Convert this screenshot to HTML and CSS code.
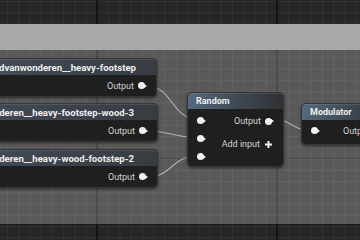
FILE: index.html
```html
<!DOCTYPE html>
<html lang="en">
<head>
    <meta charset="UTF-8">
    <meta name="viewport" content="width=device-width, initial-scale=1.0">
    <title>Sound Cue Graph</title>
    <link rel="stylesheet" href="styles.css">
</head>
<body>
    <div class="graph">
        <!-- comment box behind the nodes -->
        <div class="comment">
            <div class="comment-head"></div>
            <div class="comment-body"></div>
        </div>

        <svg class="wires" width="360" height="240" viewBox="0 0 360 240">
            <path d="M147 86 C172 86 172 119 197 119"/>
            <path d="M147 131 C172 131 172 137.5 197 137.5"/>
            <path d="M147 177 C172 177 172 156 197 156"/>
            <path d="M273 119 C292 119 290 130 310 130"/>
        </svg>

        <div class="node wave step-1">
            <div class="node-head">davidvanwonderen__heavy-footstep</div>
            <div class="node-body">
                <div class="pin-row out">Output <span class="pin"></span></div>
            </div>
        </div>

        <div class="node wave step-2">
            <div class="node-head">davidvanwonderen__heavy-footstep-wood-3</div>
            <div class="node-body">
                <div class="pin-row out">Output <span class="pin"></span></div>
            </div>
        </div>

        <div class="node wave step-3">
            <div class="node-head">davidvanwonderen__heavy-wood-footstep-2</div>
            <div class="node-body">
                <div class="pin-row out">Output <span class="pin"></span></div>
            </div>
        </div>

        <div class="node random">
            <div class="node-head">Random</div>
            <div class="node-body split">
                <div class="inputs">
                    <span class="pin"></span>
                    <span class="pin"></span>
                    <span class="pin"></span>
                </div>
                <div class="outputs">
                    <div class="pin-row out">Output <span class="pin"></span></div>
                    <div class="pin-row out">Add input
                        <svg class="plus" width="7" height="7" viewBox="0 0 7 7"><path d="M3.5 0V7M0 3.5H7"/></svg>
                    </div>
                </div>
            </div>
        </div>

        <div class="node modulator">
            <div class="node-head">Modulator</div>
            <div class="node-body split">
                <div class="inputs">
                    <span class="pin"></span>
                </div>
                <div class="outputs">
                    <div class="pin-row out">Output <span class="pin"></span></div>
                </div>
            </div>
        </div>
    </div>
</body>
</html>
```
FILE: styles.css
```css
body {
    margin: 0;
    padding: 0;
    font-family: Roboto, "Liberation Sans", sans-serif;
    background-color: #232323;
}
.graph {
    position: relative;
    width: 360px;
    height: 240px;
    overflow: hidden;
    background-color: #262626;
    background-image:
        linear-gradient(to right, #141414 2px, transparent 2px),
        linear-gradient(to bottom, #141414 1px, transparent 1px),
        linear-gradient(to right, #323232 1px, transparent 1px),
        linear-gradient(to bottom, #323232 1px, transparent 1px);
    background-size: 180px 100%, 100% 180px, 11.25px 100%, 100% 11.25px;
    background-position: 96px 0, 0 158px, 7px 0, 0 1px;
}
.comment {
    position: absolute;
    top: 24px;
    left: -10px;
    right: -10px;
    height: 200px;
    display: flex;
    flex-direction: column;
    border-bottom: 1px solid #1c1c1c;
}
.comment-head {
    height: 26px;
    background-color: #a9a9a9;
}
.comment-body {
    flex: 1;
    background-color: rgba(255, 255, 255, 0.24);
}
.wires {
    position: absolute;
    left: 0;
    top: 0;
}
.wires path {
    fill: none;
    stroke: rgba(220, 220, 220, 0.7);
    stroke-width: 1.1;
}
.node {
    position: absolute;
    background-color: #1f1f1f;
    border: 1px solid #363636;
    border-radius: 5px;
    box-shadow: 0 1px 3px rgba(0, 0, 0, 0.55);
    color: #d2d2d2;
}
.node-head {
    height: 16px;
    line-height: 14px;
    padding: 0 8px;
    font-size: 9px;
    font-weight: bold;
    color: #eeeeee;
    white-space: nowrap;
    border-radius: 4px 4px 0 0;
    border-top: 1px solid rgba(255, 255, 255, 0.1);
    box-sizing: border-box;
    background: linear-gradient(to right, #56697d 0%, #44505c 40%, #2e3033 100%);
}
.node-body {
    height: 21px;
    padding: 0 9px 0 8px;
    display: flex;
    align-items: center;
    justify-content: flex-end;
}
.pin-row {
    display: flex;
    align-items: center;
    gap: 4px;
    font-size: 9px;
    height: 12px;
    white-space: nowrap;
}
.pin {
    position: relative;
    display: inline-block;
    width: 7px;
    height: 7px;
    margin-right: 2px;
    border-radius: 50%;
    background-color: #f2f2f2;
}
.pin::after {
    content: "";
    position: absolute;
    left: 6px;
    top: 1.5px;
    border-left: 3px solid #f2f2f2;
    border-top: 2px solid transparent;
    border-bottom: 2px solid transparent;
}
.plus {
    margin: 0 2px 0 1px;
}
.plus path {
    stroke: #f2f2f2;
    stroke-width: 2;
}

/* wave player nodes, left side runs off screen */
.wave .node-head {
    padding-right: 23px;
    font-size: 9.6px;
    line-height: 15px;
    background: linear-gradient(to right, #47525f 0%, #3e4650 40%, #383c42 100%);
}
.step-1 {
    top: 58px;
    right: 203px;
}
.step-1 .node-head {
    padding-right: 20px;
}
.step-2 {
    top: 103px;
    right: 202px;
}
.step-3 {
    top: 149px;
    right: 202px;
}

.split {
    height: auto;
    justify-content: space-between;
    align-items: flex-start;
}
.inputs {
    display: flex;
    flex-direction: column;
}
.outputs {
    display: flex;
    flex-direction: column;
    align-items: flex-end;
}

.random {
    top: 92px;
    left: 187px;
    width: 95px;
}
.random .split {
    padding: 6px 9px 6px 9px;
}
.random .inputs {
    gap: 11px;
    padding-top: 2px;
}
.random .outputs {
    gap: 11px;
}

.modulator {
    top: 103px;
    left: 301px;
    width: 90px;
}
.modulator .split {
    padding: 7px 9px 7px 9px;
}
.modulator .outputs {
    margin-top: -2px;
}
```
